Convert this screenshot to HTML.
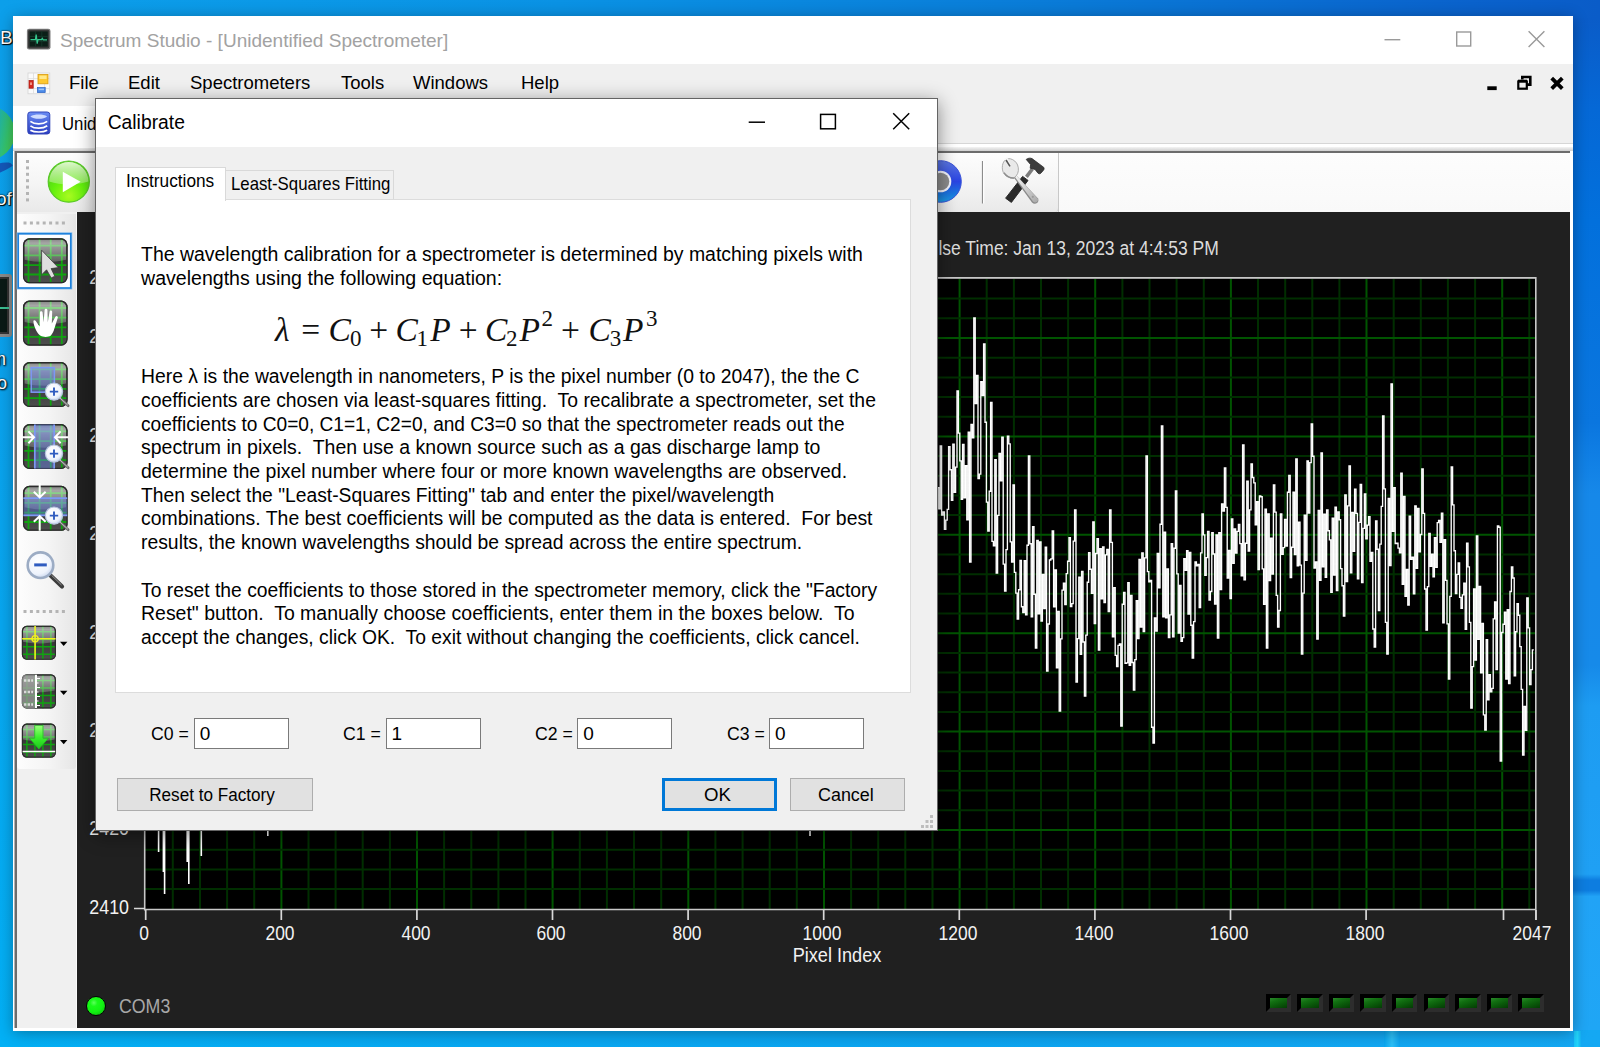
<!DOCTYPE html>
<html><head><meta charset="utf-8"><title>Spectrum Studio</title>
<style>
*{box-sizing:border-box;margin:0;padding:0}
html,body{width:1600px;height:1047px;overflow:hidden}
body{position:relative;font-family:"Liberation Sans",sans-serif;background:#1592e6;}
.abs{position:absolute}
.t{position:absolute;white-space:nowrap;line-height:1}
#desk{left:0;top:0;width:1600px;height:1047px;background:#0a8fe3}
#win{z-index:0;left:13px;top:16px;width:1560px;height:1015px;background:#f0f0f0;box-shadow:0 2px 14px rgba(0,0,0,.32)}
#titlebar{left:0;top:0;width:1560px;height:48px;background:#fff}
#menubar{left:0;top:48px;width:1560px;height:42px;background:#f0f0f0}
.menu{font-size:18.5px;color:#000;top:9.5px}
#mditabs{left:0;top:90px;width:1560px;height:37px;background:#f0f0f0;z-index:2}
#mditab{left:0;top:0;width:300px;height:41.5px;background:#fff;z-index:2}
#cframe{left:0;top:127px;width:1560px;height:888px;background:#fff}
#cframe .l1{left:0;top:0;width:1560px;height:1px;background:#d6d6d6}
#cframe .l2{left:0;top:4px;width:1560px;height:4px;background:linear-gradient(#f4f4f4,#cfcfcf)}
#cframe .l3{left:0.5px;top:7.5px;width:1556.5px;height:877px;background:#6c6c6c;border-left:1px solid #b4b4b4}
#child{left:4px;top:137px;width:1553px;height:875px;background:#202020}
#tb{left:0;top:0;width:1553px;height:59px;background:linear-gradient(#fdfdfd,#f9f9f9)}
#ltb{left:0;top:59px;width:60px;height:816px;background:#f0f0f0;border-right:1px solid #fafafa}
#ltb2{left:0;top:61px;width:59px;height:555px;border-radius:0 0 3px 3px;background:linear-gradient(90deg,#fdfdfd,#f4f4f4 55%,#e6e6e6)}
#dlg{z-index:4;left:94.5px;top:97.8px;width:843.5px;height:733.4px;background:#f0f0f0;border:1.5px solid #646464;border-right-width:1px;border-bottom-width:1px;box-shadow:0 4px 18px rgba(0,0,0,.45)}
#dtitle{left:0;top:0;width:841px;height:48px;background:#fff}
#page{left:19.5px;top:100px;width:796px;height:494px;background:#fff;border:1px solid #dcdcdc}
.p{position:absolute;left:24.6px;font-size:19.4px;line-height:24px;color:#000;white-space:pre;transform-origin:0 50%}
.inp{position:absolute;top:619px;width:95px;height:31px;background:#fff;border:1.5px solid #7a7a7a;color:#000}
.inp span{position:absolute;left:5px;top:5.2px;font-size:19px;line-height:20px;transform-origin:0 50%}
.lbl{position:absolute;top:625.6px;font-size:19px;line-height:20px;color:#000;white-space:nowrap;transform:scaleX(.93);transform-origin:0 50%}
.btn{position:absolute;top:679px;height:33px;background:#e1e1e1;border:1px solid #adadad;color:#000}
.btn span{position:absolute;left:-4px;right:0;top:6px;font-size:18.3px;line-height:20px;text-align:center;transform:scaleX(.936)}
.ax{position:absolute;color:#f2f2f2;font-size:19.5px;line-height:18px;white-space:nowrap;transform:scaleX(.895)}
</style></head><body>
<div id="desk" class="abs"></div>
<div class="abs" style="left:0;top:0;width:1600px;height:20px;background:linear-gradient(90deg,#0c9fea 0%,#0a92e4 35%,#0a7cd8 65%,#0a62cc 92%,#0a5cc8 100%)"></div>
<div class="abs" style="left:0;top:1028px;width:1600px;height:19px;background:linear-gradient(90deg,#03b0f5 0%,#08a8f2 30%,#0ca4f0 60%,#14a8f3 100%)"></div>
<div class="abs" style="left:0;top:18px;width:16px;height:1012px;background:linear-gradient(180deg,#0c9fea 0%,#0ba0eb 30%,#08a6ef 60%,#03b0f5 100%)"></div>
<div class="abs" style="left:1570px;top:18px;width:30px;height:1012px;background:linear-gradient(180deg,#0a5cc8 0%,#0568d6 9%,#0270dc 20%,#0a76df 40%,#0f7ee4 43%,#1688e9 47%,#168ae9 64%,#1d9cf2 68%,#1fa0f4 84.6%,#0d7de0 85.2%,#0d7de0 86.2%,#21a3f6 86.8%,#1fa6f5 100%)"></div>
<div class="abs" style="left:1574px;top:1031px;width:7px;height:16px;background:linear-gradient(90deg,#18c4f8,#22d4fa,#14aef3)"></div>
<div class="abs" style="left:1384px;top:1031px;width:16px;height:16px;background:linear-gradient(90deg,#08a6f0,#2cc0f8,#0ca4f0)"></div>
<!-- left desktop icons -->
<div class="abs" style="left:-39px;top:106px;width:54px;height:54px;border-radius:50%;background:linear-gradient(100deg,#1fb0a8 62%,#36c66a 82%,#52cc48 100%)"></div>
<div class="abs" style="left:-16px;top:163px;width:28px;height:11px;background:#1458b8;border-radius:0 90% 0 90%;transform:rotate(-32deg)"></div>
<div class="t" style="left:0px;top:28px;font-size:19px;color:#fff;text-shadow:1px 1px 1px #000,0 0 2px #000,0 0 1px #000">Bi</div>
<div class="t" style="left:-4px;top:189px;font-size:19px;color:#fff;text-shadow:1px 1px 1px #000,0 0 2px #000,0 0 1px #000">of</div>
<div class="abs" style="left:-30px;top:274px;width:42px;height:63px;background:#0a1a16;border:3px solid #8a8a8a;border-radius:3px;box-shadow:inset 0 0 0 2px #333"><div class="abs" style="left:6px;top:30px;width:30px;height:2px;background:#3bbf92"></div></div>
<div class="t" style="left:-9px;top:350px;font-size:18px;color:#fff;text-shadow:1px 1px 2px #000,0 0 2px #000">m</div>
<div class="t" style="left:-3px;top:374px;font-size:18px;color:#fff;text-shadow:1px 1px 2px #000,0 0 2px #000">o</div>
<div id="win" class="abs">
  <div id="titlebar" class="abs">
    <svg class="abs" style="left:12px;top:10px" width="28" height="26" viewBox="25 26 28 26"><rect x="26.9" y="28.8" width="23.6" height="20.6" rx="2.2" fill="#7d7d7d"/><rect x="28" y="29.8" width="21.4" height="18.6" rx="1.6" fill="#3a3a3a"/><rect x="29.6" y="31.4" width="18.2" height="15.2" fill="#0b1f18"/><path d="M29.6 36.4H47.8M29.6 41.4H47.8M35.6 31.4V46.6M41.8 31.4V46.6" stroke="#173a2c" stroke-width=".8"/><path d="M30.5 39.6H35.4L36.2 34.6L37.2 43.6L38 39.6H41.5L42.3 38.4L43.2 39.8H47" stroke="#36c890" stroke-width="1.2" fill="none"/></svg>
    <div class="t" id="apptitle" style="left:47px;top:14.5px;font-size:19.05px;color:#a2a2a2">Spectrum Studio - [Unidentified Spectrometer]</div>
    <svg class="abs" style="left:1360px;top:0" width="200" height="48" viewBox="1373 16 200 48"><g stroke="#9a9a9a" stroke-width="1.4" fill="none"><path d="M1384.5 39.7H1400.3"/><rect x="1456.7" y="32" width="14" height="14"/><path d="M1528.6 31.3L1544.4 47.1M1544.4 31.3L1528.6 47.1"/></g></svg>
  </div>
  <div id="menubar" class="abs">
    <svg class="abs" style="left:13px;top:6px" width="26" height="26" viewBox="26 70 26 26"><rect x="28" y="73" width="21.8" height="20.8" fill="#fafafa" stroke="#d4d4d4" stroke-width=".8"/><path d="M33.5 73V93.8M28 78.6H49.8M28 88.6H49.8M44.6 84V93.8" stroke="#dcdcdc" stroke-width=".8"/><rect x="29" y="80.4" width="4.2" height="7.8" fill="#d42a1e" stroke="#a81a12" stroke-width=".7"/><rect x="30.2" y="82.4" width="1.6" height="2.6" fill="#f6b0a0"/><rect x="38" y="74.4" width="10" height="9.4" fill="#fdc830" stroke="#d89a10" stroke-width=".8"/><rect x="39.4" y="75.6" width="7.2" height="3.4" fill="#ffe88a"/><rect x="37.4" y="87.6" width="7.8" height="5" fill="#4a8ae8" stroke="#2a62c0" stroke-width=".7"/><rect x="38.6" y="88.6" width="5.4" height="1.6" fill="#9cc4fa"/></svg>
    <div class="t menu" style="left:56px">File</div>
    <div class="t menu" style="left:115px">Edit</div>
    <div class="t menu" style="left:177px">Spectrometers</div>
    <div class="t menu" style="left:328px">Tools</div>
    <div class="t menu" style="left:400px">Windows</div>
    <div class="t menu" style="left:508px">Help</div>
    <svg class="abs" style="left:1460px;top:0" width="100" height="42" viewBox="1473 64 100 42"><rect x="1487.3" y="86.3" width="9.4" height="3.8" fill="#000"/><g stroke="#000" fill="none"><path d="M1522.3 79.5V77H1530.3V84.6H1526.8" stroke-width="2.6"/><rect x="1518.3" y="81.5" width="8.5" height="7.2" stroke-width="2.2"/><path d="M1518 81H1527" stroke-width="2.6"/><path d="M1551.7 78.2L1562.3 88.6M1562.3 78.2L1551.7 88.6" stroke-width="3.8"/></g></svg>
  </div>
  <div id="mditabs" class="abs"><div id="mditab" class="abs">
    <svg class="abs" style="left:13px;top:4px" width="26" height="28" viewBox="26 110 26 28"><defs><linearGradient id="gdb" x1="0" y1="0" x2="0" y2="1"><stop offset="0" stop-color="#6a8cf4"/><stop offset="1" stop-color="#2a3cc0"/></linearGradient></defs><rect x="27.8" y="112" width="22" height="22" rx="2.6" fill="url(#gdb)" stroke="#3346b8" stroke-width="1"/><path d="M30.4 116.4C34 113.8 43.6 113.8 47.2 116.4C43.6 119.6 34 119.6 30.4 116.4Z" fill="#cfdcff"/><path d="M30.4 121.4C34.5 124.6 43 124.6 47.2 121.4M30.4 125.8C34.5 129 43 129 47.2 125.8M30.4 130.2C34.5 132.6 43 132.6 47.2 130.2" stroke="#fff" stroke-width="1.7" fill="none"/></svg>
    <div class="t" style="left:49px;top:8.5px;font-size:18px;color:#000;transform:scaleX(.93);transform-origin:0 50%">Unidentified Spectrometer</div>
  </div></div>
  <div id="cframe" class="abs"><div class="abs l1"></div><div class="abs l2"></div><div class="abs l3"></div></div>
  <div id="child" class="abs">
    <div id="tb" class="abs"><div class="abs" style="left:0;top:0;width:1042px;height:59px;border-radius:0 0 4px 0;background:linear-gradient(#fdfdfd,#f5f5f5 50%,#e9e9e9);border-right:1px solid #c9c9c9"></div></div>
    <div id="ltb" class="abs"></div><div id="ltb2" class="abs"></div>
  </div>
</div>
<!-- plot -->
<svg class="abs" style="left:0;top:0" width="1600" height="1047" viewBox="0 0 1600 1047">
  <rect x="145" y="279" width="1390" height="630" fill="#000"/>
  <line x1="172.8" y1="279" x2="172.8" y2="909" stroke="#002e00" stroke-width="2"/>
<line x1="200.0" y1="279" x2="200.0" y2="909" stroke="#002e00" stroke-width="2"/>
<line x1="227.1" y1="279" x2="227.1" y2="909" stroke="#002e00" stroke-width="2"/>
<line x1="254.2" y1="279" x2="254.2" y2="909" stroke="#002e00" stroke-width="2"/>
<line x1="281.4" y1="279" x2="281.4" y2="909" stroke="#005400" stroke-width="2"/>
<line x1="308.5" y1="279" x2="308.5" y2="909" stroke="#002e00" stroke-width="2"/>
<line x1="335.6" y1="279" x2="335.6" y2="909" stroke="#002e00" stroke-width="2"/>
<line x1="362.7" y1="279" x2="362.7" y2="909" stroke="#002e00" stroke-width="2"/>
<line x1="389.9" y1="279" x2="389.9" y2="909" stroke="#002e00" stroke-width="2"/>
<line x1="417.0" y1="279" x2="417.0" y2="909" stroke="#005400" stroke-width="2"/>
<line x1="444.1" y1="279" x2="444.1" y2="909" stroke="#002e00" stroke-width="2"/>
<line x1="471.3" y1="279" x2="471.3" y2="909" stroke="#002e00" stroke-width="2"/>
<line x1="498.4" y1="279" x2="498.4" y2="909" stroke="#002e00" stroke-width="2"/>
<line x1="525.5" y1="279" x2="525.5" y2="909" stroke="#002e00" stroke-width="2"/>
<line x1="552.6" y1="279" x2="552.6" y2="909" stroke="#005400" stroke-width="2"/>
<line x1="579.8" y1="279" x2="579.8" y2="909" stroke="#002e00" stroke-width="2"/>
<line x1="606.9" y1="279" x2="606.9" y2="909" stroke="#002e00" stroke-width="2"/>
<line x1="634.0" y1="279" x2="634.0" y2="909" stroke="#002e00" stroke-width="2"/>
<line x1="661.2" y1="279" x2="661.2" y2="909" stroke="#002e00" stroke-width="2"/>
<line x1="688.3" y1="279" x2="688.3" y2="909" stroke="#005400" stroke-width="2"/>
<line x1="715.4" y1="279" x2="715.4" y2="909" stroke="#002e00" stroke-width="2"/>
<line x1="742.6" y1="279" x2="742.6" y2="909" stroke="#002e00" stroke-width="2"/>
<line x1="769.7" y1="279" x2="769.7" y2="909" stroke="#002e00" stroke-width="2"/>
<line x1="796.8" y1="279" x2="796.8" y2="909" stroke="#002e00" stroke-width="2"/>
<line x1="824.0" y1="279" x2="824.0" y2="909" stroke="#005400" stroke-width="2"/>
<line x1="851.1" y1="279" x2="851.1" y2="909" stroke="#002e00" stroke-width="2"/>
<line x1="878.2" y1="279" x2="878.2" y2="909" stroke="#002e00" stroke-width="2"/>
<line x1="905.3" y1="279" x2="905.3" y2="909" stroke="#002e00" stroke-width="2"/>
<line x1="932.5" y1="279" x2="932.5" y2="909" stroke="#002e00" stroke-width="2"/>
<line x1="959.6" y1="279" x2="959.6" y2="909" stroke="#005400" stroke-width="2"/>
<line x1="986.7" y1="279" x2="986.7" y2="909" stroke="#002e00" stroke-width="2"/>
<line x1="1013.9" y1="279" x2="1013.9" y2="909" stroke="#002e00" stroke-width="2"/>
<line x1="1041.0" y1="279" x2="1041.0" y2="909" stroke="#002e00" stroke-width="2"/>
<line x1="1068.1" y1="279" x2="1068.1" y2="909" stroke="#002e00" stroke-width="2"/>
<line x1="1095.2" y1="279" x2="1095.2" y2="909" stroke="#005400" stroke-width="2"/>
<line x1="1122.4" y1="279" x2="1122.4" y2="909" stroke="#002e00" stroke-width="2"/>
<line x1="1149.5" y1="279" x2="1149.5" y2="909" stroke="#002e00" stroke-width="2"/>
<line x1="1176.6" y1="279" x2="1176.6" y2="909" stroke="#002e00" stroke-width="2"/>
<line x1="1203.8" y1="279" x2="1203.8" y2="909" stroke="#002e00" stroke-width="2"/>
<line x1="1230.9" y1="279" x2="1230.9" y2="909" stroke="#005400" stroke-width="2"/>
<line x1="1258.0" y1="279" x2="1258.0" y2="909" stroke="#002e00" stroke-width="2"/>
<line x1="1285.2" y1="279" x2="1285.2" y2="909" stroke="#002e00" stroke-width="2"/>
<line x1="1312.3" y1="279" x2="1312.3" y2="909" stroke="#002e00" stroke-width="2"/>
<line x1="1339.4" y1="279" x2="1339.4" y2="909" stroke="#002e00" stroke-width="2"/>
<line x1="1366.5" y1="279" x2="1366.5" y2="909" stroke="#005400" stroke-width="2"/>
<line x1="1393.7" y1="279" x2="1393.7" y2="909" stroke="#002e00" stroke-width="2"/>
<line x1="1420.8" y1="279" x2="1420.8" y2="909" stroke="#002e00" stroke-width="2"/>
<line x1="1447.9" y1="279" x2="1447.9" y2="909" stroke="#002e00" stroke-width="2"/>
<line x1="1475.1" y1="279" x2="1475.1" y2="909" stroke="#002e00" stroke-width="2"/>
<line x1="1502.2" y1="279" x2="1502.2" y2="909" stroke="#005400" stroke-width="2"/>
<line x1="1529.3" y1="279" x2="1529.3" y2="909" stroke="#002e00" stroke-width="2"/>
<line x1="145" y1="298.6" x2="1535" y2="298.6" stroke="#002e00" stroke-width="2"/>
<line x1="145" y1="318.3" x2="1535" y2="318.3" stroke="#002e00" stroke-width="2"/>
<line x1="145" y1="338.0" x2="1535" y2="338.0" stroke="#005400" stroke-width="2"/>
<line x1="145" y1="357.7" x2="1535" y2="357.7" stroke="#002e00" stroke-width="2"/>
<line x1="145" y1="377.4" x2="1535" y2="377.4" stroke="#002e00" stroke-width="2"/>
<line x1="145" y1="397.0" x2="1535" y2="397.0" stroke="#002e00" stroke-width="2"/>
<line x1="145" y1="416.7" x2="1535" y2="416.7" stroke="#002e00" stroke-width="2"/>
<line x1="145" y1="436.4" x2="1535" y2="436.4" stroke="#005400" stroke-width="2"/>
<line x1="145" y1="456.1" x2="1535" y2="456.1" stroke="#002e00" stroke-width="2"/>
<line x1="145" y1="475.8" x2="1535" y2="475.8" stroke="#002e00" stroke-width="2"/>
<line x1="145" y1="495.4" x2="1535" y2="495.4" stroke="#002e00" stroke-width="2"/>
<line x1="145" y1="515.1" x2="1535" y2="515.1" stroke="#002e00" stroke-width="2"/>
<line x1="145" y1="534.8" x2="1535" y2="534.8" stroke="#005400" stroke-width="2"/>
<line x1="145" y1="554.5" x2="1535" y2="554.5" stroke="#002e00" stroke-width="2"/>
<line x1="145" y1="574.2" x2="1535" y2="574.2" stroke="#002e00" stroke-width="2"/>
<line x1="145" y1="593.8" x2="1535" y2="593.8" stroke="#002e00" stroke-width="2"/>
<line x1="145" y1="613.5" x2="1535" y2="613.5" stroke="#002e00" stroke-width="2"/>
<line x1="145" y1="633.2" x2="1535" y2="633.2" stroke="#005400" stroke-width="2"/>
<line x1="145" y1="652.9" x2="1535" y2="652.9" stroke="#002e00" stroke-width="2"/>
<line x1="145" y1="672.6" x2="1535" y2="672.6" stroke="#002e00" stroke-width="2"/>
<line x1="145" y1="692.2" x2="1535" y2="692.2" stroke="#002e00" stroke-width="2"/>
<line x1="145" y1="711.9" x2="1535" y2="711.9" stroke="#002e00" stroke-width="2"/>
<line x1="145" y1="731.6" x2="1535" y2="731.6" stroke="#005400" stroke-width="2"/>
<line x1="145" y1="751.3" x2="1535" y2="751.3" stroke="#002e00" stroke-width="2"/>
<line x1="145" y1="771.0" x2="1535" y2="771.0" stroke="#002e00" stroke-width="2"/>
<line x1="145" y1="790.6" x2="1535" y2="790.6" stroke="#002e00" stroke-width="2"/>
<line x1="145" y1="810.3" x2="1535" y2="810.3" stroke="#002e00" stroke-width="2"/>
<line x1="145" y1="830.0" x2="1535" y2="830.0" stroke="#005400" stroke-width="2"/>
<line x1="145" y1="849.7" x2="1535" y2="849.7" stroke="#002e00" stroke-width="2"/>
<line x1="145" y1="869.4" x2="1535" y2="869.4" stroke="#002e00" stroke-width="2"/>
<line x1="145" y1="889.0" x2="1535" y2="889.0" stroke="#002e00" stroke-width="2"/>
  <path d="M936.0 435.6V475.5H937.4V487.6H938.8V508.7H940.2V446.0H941.6V515.1H943.0V511.8H944.4V529.4H945.8V520.1H947.2V509.3H948.6V446.7H950.0V469.7H951.4V500.2H952.8V444.1H954.2V492.2H955.6V467.1H957.0V391.0H958.4V433.1H959.8V460.8H961.2V499.2H962.6V444.4H964.0V497.7H965.4V465.7H966.8V519.8H968.2V432.2H969.6V562.0H971.0V424.4H972.4V437.9H973.8V318.0H975.2V403.6H976.6V375.5H978.0V478.5H979.4V474.1H980.8V381.7H982.2V395.5H983.6V344.0H985.0V422.2H986.4V502.1H987.8V531.0H989.2V491.2H990.6V402.5H992.0V541.4H993.4V545.8H994.8V459.7H996.2V573.0H997.6V515.3H999.0V453.3H1000.4V480.7H1001.8V437.2H1003.2V564.1H1004.6V591.0H1006.0V549.6H1007.4V436.2H1008.8V443.8H1010.2V541.8H1011.6V562.0H1013.0V484.9H1014.4V572.3H1015.8V593.1H1017.2V619.0H1018.6V589.7H1020.0V560.4H1021.4V606.7H1022.8V612.6H1024.2V560.7H1025.6V614.9H1027.0V545.2H1028.4V456.0H1029.8V543.7H1031.2V616.7H1032.6V526.7H1034.0V594.2H1035.4V648.0H1036.8V540.4H1038.2V613.9H1039.6V541.8H1041.0V621.0H1042.4V574.5H1043.8V608.5H1045.2V547.1H1046.6V671.0H1048.0V624.0H1049.4V560.0H1050.8V558.9H1052.2V531.0H1053.6V606.7H1055.0V569.9H1056.4V667.8H1057.8V611.4H1059.2V711.0H1060.6V638.8H1062.0V590.1H1063.4V583.2H1064.8V604.5H1066.2V573.6H1067.6V561.2H1069.0V537.6H1070.4V606.5H1071.8V603.6H1073.2V541.1H1074.6V510.0H1076.0V682.0H1077.4V638.6H1078.8V577.2H1080.2V654.4H1081.6V571.5H1083.0V642.0H1084.4V696.0H1085.8V635.1H1087.2V582.2H1088.6V552.6H1090.0V569.2H1091.4V593.3H1092.8V522.0H1094.2V623.5H1095.6V553.5H1097.0V538.6H1098.4V650.0H1099.8V548.6H1101.2V598.7H1102.6V546.8H1104.0V602.5H1105.4V554.9H1106.8V549.4H1108.2V611.5H1109.6V510.0H1111.0V542.4H1112.4V636.7H1113.8V587.6H1115.2V655.4H1116.6V666.5H1118.0V645.4H1119.4V644.0H1120.8V726.0H1122.2V604.2H1123.6V592.3H1125.0V663.2H1126.4V662.9H1127.8V582.6H1129.2V665.2H1130.6V595.3H1132.0V662.5H1133.4V690.0H1134.8V659.6H1136.2V600.7H1137.6V638.6H1139.0V559.5H1140.4V627.1H1141.8V552.8H1143.2V631.5H1144.6V557.8H1146.0V456.0H1147.4V571.6H1148.8V581.8H1150.2V580.4H1151.6V727.2H1153.0V743.0H1154.4V618.0H1155.8V631.1H1157.2V553.5H1158.6V587.8H1160.0V524.2H1161.4V426.0H1162.8V616.7H1164.2V532.2H1165.6V617.8H1167.0V568.8H1168.4V637.5H1169.8V614.9H1171.2V543.6H1172.6V636.9H1174.0V548.2H1175.4V491.0H1176.8V573.8H1178.2V633.1H1179.6V585.5H1181.0V641.2H1182.4V637.6H1183.8V558.7H1185.2V570.3H1186.6V550.7H1188.0V614.1H1189.4V552.5H1190.8V625.2H1192.2V658.0H1193.6V621.6H1195.0V562.0H1196.4V565.7H1197.8V564.3H1199.2V607.5H1200.6V552.8H1202.0V514.0H1203.4V534.8H1204.8V575.3H1206.2V557.6H1207.6V531.4H1209.0V600.0H1210.4V591.5H1211.8V532.6H1213.2V554.0H1214.6V604.0H1216.0V534.8H1217.4V638.0H1218.8V532.6H1220.2V589.5H1221.6V504.0H1223.0V511.1H1224.4V468.0H1225.8V507.3H1227.2V578.1H1228.6V550.5H1230.0V598.5H1231.4V518.9H1232.8V563.3H1234.2V529.0H1235.6V553.0H1237.0V531.3H1238.4V524.3H1239.8V543.6H1241.2V575.8H1242.6V445.0H1244.0V579.9H1245.4V543.2H1246.8V481.1H1248.2V551.0H1249.6V509.9H1251.0V464.0H1252.4V477.5H1253.8V482.8H1255.2V524.7H1256.6V501.7H1258.0V569.5H1259.4V496.0H1260.8V496.7H1262.2V568.8H1263.6V604.4H1265.0V509.1H1266.4V648.0H1267.8V513.8H1269.2V580.5H1270.6V538.1H1272.0V574.1H1273.4V485.0H1274.8V512.1H1276.2V595.4H1277.6V627.0H1279.0V610.5H1280.4V513.9H1281.8V554.4H1283.2V547.6H1284.6V519.4H1286.0V546.1H1287.4V492.2H1288.8V475.3H1290.2V577.5H1291.6V547.2H1293.0V492.2H1294.4V554.6H1295.8V459.0H1297.2V565.8H1298.6V522.1H1300.0V565.1H1301.4V654.0H1302.8V593.1H1304.2V515.2H1305.6V560.3H1307.0V461.0H1308.4V513.0H1309.8V462.6H1311.2V424.0H1312.6V456.2H1314.0V568.0H1315.4V561.8H1316.8V639.0H1318.2V510.3H1319.6V580.2H1321.0V453.0H1322.4V566.9H1323.8V514.1H1325.2V577.4H1326.6V510.0H1328.0V530.7H1329.4V539.9H1330.8V592.4H1332.2V518.1H1333.6V575.1H1335.0V507.1H1336.4V590.6H1337.8V512.0H1339.2V519.7H1340.6V568.6H1342.0V585.7H1343.4V616.0H1344.8V494.9H1346.2V581.5H1347.6V505.9H1349.0V466.0H1350.4V572.9H1351.8V512.3H1353.2V551.3H1354.6V489.2H1356.0V513.3H1357.4V578.9H1358.8V522.4H1360.2V484.4H1361.6V582.6H1363.0V528.4H1364.4V494.0H1365.8V538.9H1367.2V525.1H1368.6V516.6H1370.0V561.4H1371.4V552.3H1372.8V629.0H1374.2V647.0H1375.6V520.8H1377.0V549.2H1378.4V610.6H1379.8V544.1H1381.2V506.3H1382.6V416.0H1384.0V488.9H1385.4V622.4H1386.8V654.0H1388.2V498.5H1389.6V565.6H1391.0V384.0H1392.4V531.4H1393.8V487.6H1395.2V543.5H1396.6V543.1H1398.0V548.1H1399.4V552.8H1400.8V473.1H1402.2V584.2H1403.6V496.4H1405.0V596.3H1406.4V569.5H1407.8V605.0H1409.2V516.1H1410.6V559.4H1412.0V557.1H1413.4V593.7H1414.8V506.0H1416.2V568.2H1417.6V508.5H1419.0V551.9H1420.4V534.5H1421.8V469.0H1423.2V513.4H1424.6V589.0H1426.0V630.0H1427.4V586.6H1428.8V533.4H1430.2V566.4H1431.6V554.2H1433.0V576.8H1434.4V537.7H1435.8V567.3H1437.2V522.6H1438.6V520.5H1440.0V542.3H1441.4V513.2H1442.8V622.8H1444.2V539.6H1445.6V580.3H1447.0V623.9H1448.4V679.0H1449.8V596.3H1451.2V467.0H1452.6V504.9H1454.0V550.7H1455.4V593.6H1456.8V574.4H1458.2V562.8H1459.6V597.4H1461.0V608.2H1462.4V594.9H1463.8V583.1H1465.2V629.2H1466.6V543.1H1468.0V566.8H1469.4V622.4H1470.8V708.0H1472.2V666.6H1473.6V589.0H1475.0V660.1H1476.4V536.0H1477.8V639.4H1479.2V586.5H1480.6V672.9H1482.0V623.4H1483.4V714.8H1484.8V730.0H1486.2V639.6H1487.6V699.7H1489.0V674.7H1490.4V691.9H1491.8V688.4H1493.2V618.8H1494.6V602.0H1496.0V669.6H1497.4V526.0H1498.8V527.2H1500.2V761.0H1501.6V632.5H1503.0V624.2H1504.4V612.1H1505.8V679.1H1507.2V609.7H1508.6V683.5H1510.0V591.5H1511.4V567.0H1512.8V578.0H1514.2V675.8H1515.6V631.7H1517.0V603.7H1518.4V615.2H1519.8V646.6H1521.2V689.4H1522.6V755.0H1524.0V706.3H1525.4V730.4H1526.8V598.0H1528.2V627.9H1529.6V684.5H1531.0V669.6H1532.4V649.9H1533.8" stroke="#fff" stroke-width="1.35" fill="none" stroke-linejoin="miter"/>
<path d="M158.6 820V852M163.4 820V872M164.6 820V894M187.2 820V862M188.8 820V884M201.3 820V856M267.8 820V836M810.0 820V836" stroke="#fff" stroke-width="1.6" fill="none"/>
  <path d="M145 277.9H1536.6M144.7 277V910.5M144 909.5H1536M1535.8 277V920" stroke="#c8c8c8" stroke-width="1.6" fill="none"/>
  <path d="M145.7 910V920M281.3 910V920M416.9 910V920M552.5 910V920M688.1 910V920M823.7 910V920M959.3 910V920M1094.9 910V920M1230.5 910V920M1366.1 910V920M1503.5 910V920M1536.0 910V920M134 277.5H145M134 337.0H145M134 435.4H145M134 533.8H145M134 632.2H145M134 730.6H145M134 829.0H145M134 908.5H145" stroke="#d8d8d8" stroke-width="1.7" fill="none"/>
</svg>
<div class="ax" style="left:104.4px;top:924.4px;width:80px;text-align:center">0</div>
<div class="ax" style="left:240.0px;top:924.4px;width:80px;text-align:center">200</div>
<div class="ax" style="left:375.6px;top:924.4px;width:80px;text-align:center">400</div>
<div class="ax" style="left:511.2px;top:924.4px;width:80px;text-align:center">600</div>
<div class="ax" style="left:646.8px;top:924.4px;width:80px;text-align:center">800</div>
<div class="ax" style="left:782.4px;top:924.4px;width:80px;text-align:center">1000</div>
<div class="ax" style="left:918.0px;top:924.4px;width:80px;text-align:center">1200</div>
<div class="ax" style="left:1053.6px;top:924.4px;width:80px;text-align:center">1400</div>
<div class="ax" style="left:1189.2px;top:924.4px;width:80px;text-align:center">1600</div>
<div class="ax" style="left:1324.8px;top:924.4px;width:80px;text-align:center">1800</div>
<div class="ax" style="left:1491.9px;top:924.4px;width:80px;text-align:center">2047</div>
<div class="ax" style="left:736.7px;top:945.9px;width:200px;text-align:center;transform:scaleX(.93)">Pixel Index</div>
<div class="ax" style="left:28.5px;top:268.3px;width:100px;text-align:right;transform:scaleX(.915);transform-origin:100% 50%">2474</div>
<div class="ax" style="left:28.5px;top:327.3px;width:100px;text-align:right;transform:scaleX(.915);transform-origin:100% 50%">2470</div>
<div class="ax" style="left:28.5px;top:425.7px;width:100px;text-align:right;transform:scaleX(.915);transform-origin:100% 50%">2460</div>
<div class="ax" style="left:28.5px;top:524.1px;width:100px;text-align:right;transform:scaleX(.915);transform-origin:100% 50%">2450</div>
<div class="ax" style="left:28.5px;top:622.5px;width:100px;text-align:right;transform:scaleX(.915);transform-origin:100% 50%">2440</div>
<div class="ax" style="left:28.5px;top:720.9px;width:100px;text-align:right;transform:scaleX(.915);transform-origin:100% 50%">2430</div>
<div class="ax" style="left:28.5px;top:819.3px;width:100px;text-align:right;transform:scaleX(.915);transform-origin:100% 50%">2420</div>
<div class="ax" style="left:28.5px;top:898.3px;width:100px;text-align:right;transform:scaleX(.915);transform-origin:100% 50%">2410</div>
<div class="ax" id="pulse" style="left:916.6px;top:239.4px;transform-origin:0 50%;transform:scaleX(.898);color:#dcdcdc">Pulse Time: Jan 13, 2023 at 4:4:53 PM</div>
<div class="abs" style="left:88.4px;top:998.4px;width:17px;height:17px;border-radius:50%;background:#5a5a5a"></div><div class="abs" style="left:85.5px;top:995.5px;width:20px;height:20px;border-radius:50%;border:1.2px solid #050505;background:radial-gradient(circle at 38% 32%,#5cff5c 0%,#1afa1a 22%,#12f212 55%,#0cc00c 85%,#088008 100%)"></div>
<div class="ax" style="left:119px;top:997.2px;color:#a8a8a8;transform-origin:0 50%;transform:scaleX(.91)">COM3</div>
<div class="abs" style="left:1265.5px;top:993.5px;width:25.5px;height:18.5px;border-style:solid;border-width:4px 4.5px 4.5px 4.5px;border-color:#000 #2d2d2d #2d2d2d #000;background:linear-gradient(160deg,#2b8a2b 0%,#127012 30%,#0a5a0a 60%,#043c04 100%)"></div>
<div class="abs" style="left:1297.1px;top:993.5px;width:25.5px;height:18.5px;border-style:solid;border-width:4px 4.5px 4.5px 4.5px;border-color:#000 #2d2d2d #2d2d2d #000;background:linear-gradient(160deg,#2b8a2b 0%,#127012 30%,#0a5a0a 60%,#043c04 100%)"></div>
<div class="abs" style="left:1328.7px;top:993.5px;width:25.5px;height:18.5px;border-style:solid;border-width:4px 4.5px 4.5px 4.5px;border-color:#000 #2d2d2d #2d2d2d #000;background:linear-gradient(160deg,#2b8a2b 0%,#127012 30%,#0a5a0a 60%,#043c04 100%)"></div>
<div class="abs" style="left:1360.3px;top:993.5px;width:25.5px;height:18.5px;border-style:solid;border-width:4px 4.5px 4.5px 4.5px;border-color:#000 #2d2d2d #2d2d2d #000;background:linear-gradient(160deg,#2b8a2b 0%,#127012 30%,#0a5a0a 60%,#043c04 100%)"></div>
<div class="abs" style="left:1391.9px;top:993.5px;width:25.5px;height:18.5px;border-style:solid;border-width:4px 4.5px 4.5px 4.5px;border-color:#000 #2d2d2d #2d2d2d #000;background:linear-gradient(160deg,#2b8a2b 0%,#127012 30%,#0a5a0a 60%,#043c04 100%)"></div>
<div class="abs" style="left:1423.5px;top:993.5px;width:25.5px;height:18.5px;border-style:solid;border-width:4px 4.5px 4.5px 4.5px;border-color:#000 #2d2d2d #2d2d2d #000;background:linear-gradient(160deg,#2b8a2b 0%,#127012 30%,#0a5a0a 60%,#043c04 100%)"></div>
<div class="abs" style="left:1455.1px;top:993.5px;width:25.5px;height:18.5px;border-style:solid;border-width:4px 4.5px 4.5px 4.5px;border-color:#000 #2d2d2d #2d2d2d #000;background:linear-gradient(160deg,#2b8a2b 0%,#127012 30%,#0a5a0a 60%,#043c04 100%)"></div>
<div class="abs" style="left:1486.7px;top:993.5px;width:25.5px;height:18.5px;border-style:solid;border-width:4px 4.5px 4.5px 4.5px;border-color:#000 #2d2d2d #2d2d2d #000;background:linear-gradient(160deg,#2b8a2b 0%,#127012 30%,#0a5a0a 60%,#043c04 100%)"></div>
<div class="abs" style="left:1518.3px;top:993.5px;width:25.5px;height:18.5px;border-style:solid;border-width:4px 4.5px 4.5px 4.5px;border-color:#000 #2d2d2d #2d2d2d #000;background:linear-gradient(160deg,#2b8a2b 0%,#127012 30%,#0a5a0a 60%,#043c04 100%)"></div>
<svg class="abs" style="left:0;top:0" width="1600" height="1047" viewBox="0 0 1600 1047">
<defs>
<linearGradient id="gDark" x1="0" y1="0" x2="0" y2="1"><stop offset="0" stop-color="#5a5a5a"/><stop offset=".12" stop-color="#7a7a7a"/><stop offset=".48" stop-color="#565656"/><stop offset=".52" stop-color="#343434"/><stop offset="1" stop-color="#444"/></linearGradient>
<radialGradient id="gPlay" cx=".5" cy=".85" r=".75"><stop offset="0" stop-color="#a8fa20"/><stop offset=".55" stop-color="#62f00c"/><stop offset="1" stop-color="#4ec818"/></radialGradient>
<linearGradient id="gPlayHi" x1="0" y1="0" x2="0" y2="1"><stop offset="0" stop-color="#e6fbd6" stop-opacity=".95"/><stop offset="1" stop-color="#b6f090" stop-opacity=".55"/></linearGradient>
<linearGradient id="gBlue" x1="0" y1="0" x2="0" y2="1"><stop offset="0" stop-color="#5c78e4"/><stop offset=".5" stop-color="#2a44e2"/><stop offset=".8" stop-color="#1a78e0"/><stop offset="1" stop-color="#1c9ce4"/></linearGradient>
<radialGradient id="gLens" cx=".4" cy=".35" r=".7"><stop offset="0" stop-color="#fff"/><stop offset=".7" stop-color="#eef3fc"/><stop offset="1" stop-color="#c4d2ec"/></radialGradient>
<linearGradient id="gArrow" x1="0" y1="0" x2="0" y2="1"><stop offset="0" stop-color="#9cff7c"/><stop offset=".5" stop-color="#3cf02c"/><stop offset="1" stop-color="#1cc81c"/></linearGradient>
<linearGradient id="gWrench" x1="0" y1="0" x2="1" y2="1"><stop offset="0" stop-color="#f4f4f4"/><stop offset=".5" stop-color="#cfcfcf"/><stop offset="1" stop-color="#a8a8a8"/></linearGradient>
<clipPath id="clipIcon"><rect x="0" y="0" width="44.6" height="45" rx="6.5"/></clipPath>
<clipPath id="clipIconS"><rect x="0" y="0" width="34" height="34" rx="5"/></clipPath>
<linearGradient id="gBase" x1="0" y1="0" x2="0" y2="1"><stop offset="0" stop-color="#3a3a3a"/><stop offset=".5" stop-color="#383838"/><stop offset="1" stop-color="#4e4e4e"/></linearGradient>
<linearGradient id="gGloss" x1="0" y1="0" x2="0" y2="1"><stop offset="0" stop-color="#fff" stop-opacity=".42"/><stop offset=".15" stop-color="#fff" stop-opacity=".55"/><stop offset="1" stop-color="#fff" stop-opacity=".2"/></linearGradient>
<g id="icoBg"><rect x="0" y="0" width="44.6" height="45" rx="6.5" fill="url(#gBase)"/><path d="M5.5 0V45M16.6 0V45M27.7 0V45M38.8 0V45M0 7.4H44.6M0 17.1H44.6M0 26.8H44.6M0 36.2H44.6" stroke="#10a210" stroke-width="1.8" clip-path="url(#clipIcon)"/><path d="M1.5 6.5A5 5 0 0 1 6.5 1.5H38.1A5 5 0 0 1 43.1 6.5V21.5C30 24.5 14 24.5 1.5 21.5Z" fill="url(#gGloss)"/><rect x=".6" y=".6" width="43.4" height="43.8" rx="6" fill="none" stroke="#2b2b2b" stroke-width="1.3"/></g>
<g id="icoBgS"><rect x="0" y="0" width="34" height="34" rx="5" fill="url(#gBase)"/><path d="M5 0V34M13 0V34M21 0V34M29 0V34M0 6H34M0 13.5H34M0 21H34M0 28.5H34" stroke="#10a210" stroke-width="1.5" clip-path="url(#clipIconS)"/><path d="M1.2 5A4 4 0 0 1 5.2 1.2H28.8A4 4 0 0 1 32.8 5V16C23 18.4 11 18.4 1.2 16Z" fill="url(#gGloss)"/><rect x=".5" y=".5" width="33" height="33" rx="4.6" fill="none" stroke="#2b2b2b" stroke-width="1.1"/></g>
<g id="mag"><path d="M5.5 6L14.2 14.2" stroke="#6a6a6a" stroke-width="2.6" stroke-linecap="round"/><path d="M6 6.4L13.8 13.6" stroke="#c4c4c4" stroke-width="1"/><circle cx="0" cy="0" r="8.6" fill="url(#gLens)" stroke="#b6c4dc" stroke-width="1.2"/><path d="M-4.2 0H4.2M0 -4.2V4.2" stroke="#2f5cc0" stroke-width="1.9"/></g>
</defs>
<!-- toolbar grips -->
<g fill="#b4b4b4"><rect x="26" y="160" width="3" height="3"/><rect x="26" y="166.4" width="3" height="3"/><rect x="26" y="172.8" width="3" height="3"/><rect x="26" y="179.2" width="3" height="3"/><rect x="26" y="185.6" width="3" height="3"/><rect x="26" y="192" width="3" height="3"/><rect x="26" y="198.4" width="3" height="3"/>
<rect x="23.5" y="221.5" width="3" height="3"/><rect x="29.9" y="221.5" width="3" height="3"/><rect x="36.3" y="221.5" width="3" height="3"/><rect x="42.7" y="221.5" width="3" height="3"/><rect x="49.1" y="221.5" width="3" height="3"/><rect x="55.5" y="221.5" width="3" height="3"/><rect x="61.9" y="221.5" width="3" height="3"/>
<rect x="23.5" y="610" width="3" height="3"/><rect x="29.9" y="610" width="3" height="3"/><rect x="36.3" y="610" width="3" height="3"/><rect x="42.7" y="610" width="3" height="3"/><rect x="49.1" y="610" width="3" height="3"/><rect x="55.5" y="610" width="3" height="3"/><rect x="61.9" y="610" width="3" height="3"/></g>
<!-- play -->
<circle cx="68.8" cy="181.6" r="20.6" fill="url(#gPlay)" stroke="#58c828" stroke-width="1.2"/>
<path d="M49.2 181.6A19.6 19.6 0 0 1 88.4 181.6C76 185.5 61 185.5 49.2 181.6Z" fill="url(#gPlayHi)"/>
<path d="M62.8 171.7L80.6 181.8L62.8 192.3Z" fill="#fff"/>
<!-- blue circle (partly hidden by dialog) -->
<circle cx="940.5" cy="181.5" r="20.8" fill="url(#gBlue)" stroke="#3a52d8" stroke-width="1"/>
<circle cx="940.5" cy="181.5" r="10.8" fill="#f4f6ff"/><circle cx="940.5" cy="181.5" r="8.8" fill="#8c8c8c"/>
<!-- separator -->
<path d="M982.5 161V203.5" stroke="#8c8c8c" stroke-width="1.2"/><path d="M983.7 161V203.5" stroke="#fff" stroke-width="1.2"/>
<!-- tools: hammer + wrench -->
<g>
<path d="M1005.6 198.2L1022.6 176.4L1028 180.4L1011.4 202.4Z" fill="#2a2a2a" stroke="#2a2a2a" stroke-width="1" stroke-linejoin="round"/>
<path d="M1026.4 176.8L1032.4 169" stroke="#7c7c7c" stroke-width="3.6"/>
<path d="M1026.2 159.4C1028 158 1030.4 157.8 1032 158.6L1043.8 167.4C1044.4 168.4 1044 169.8 1043.2 170.6L1040.6 173.4C1039.8 174 1038.8 173.8 1038 173.2L1035 169.4L1030.2 168.2L1030.6 164.6Z" fill="#3c3c3c" stroke="#2a2a2a" stroke-width=".8"/>
<path d="M1013.6 177.2L1015.8 174.8L1037.8 198.2C1039 200 1038.4 202 1037 203C1035.4 204 1033.4 203.8 1032 202.4Z" fill="#8a8a8a"/>
<path d="M1014.6 176.6L1016.2 175.2L1037.6 198.4C1038.4 199.8 1038 201.2 1036.8 202C1035.4 202.8 1034 202.4 1033 201.4Z" fill="url(#gWrench)"/>
<circle cx="1032.8" cy="196.8" r="1.1" fill="#9a9a9a"/>
<path d="M1004.6 160.6C1001.6 164.2 1001.6 170.4 1004.2 174C1006.2 176.6 1009.6 178 1013.4 178.4L1016.4 175.6C1018.6 173 1019 168.6 1017.6 165C1016.4 162 1013.6 159.6 1010.4 158.8C1008.4 158.4 1006.4 159 1004.6 160.6Z" fill="#e9e9e9" stroke="#a4a4a4" stroke-width=".9"/>
<path d="M1004.2 158.6L1007.4 157.6L1011 165.8L1008.6 167Z" fill="#f6f6f6"/><path d="M1006 160L1010 166.4" stroke="#555" stroke-width="1.6"/>
<path d="M1004 172.6C1006.4 176.4 1010.4 178.2 1014.4 178" stroke="#8e8e8e" stroke-width="1.4" fill="none"/>
</g>
<path d="M1058.5 156V212" stroke="#c8c8c8" stroke-width="1"/>
<!-- selection box on first icon -->
<rect x="17.2" y="232.8" width="54.6" height="56.2" fill="none" stroke="#8cc0ee" stroke-width="1"/><rect x="18.2" y="233.8" width="52.6" height="54.2" fill="#fcfdff" stroke="#1e82dc" stroke-width="1.7"/>
<!-- icon 1 pointer -->
<use href="#icoBg" x="23" y="238.3"/>
<path d="M41.6 250.2V274.8L46.6 269.8L51.2 278L54.8 276.2L51.1 268.6L58.3 267.6Z" fill="#dedede" stroke="#3c3c3c" stroke-width=".8"/>
<!-- icon 2 hand -->
<use href="#icoBg" x="23" y="300.6"/>
<path d="M36.2 330.5C34.8 327.5 33.6 324.2 33.4 321.4C33.3 320 35 319.8 35.8 321L39.6 326.4L39.9 312.6C40 310.8 42.4 310.8 42.6 312.6L43.6 322.2L44.6 310C44.7 308.2 47.2 308.2 47.4 310L47.8 322.2L49.6 311.6C49.9 309.9 52.2 310.2 52.2 312L51.8 323.6L55.4 316.8C56.2 315.4 58.2 316.2 57.8 317.8L54.4 328.4C53.6 331 52.8 333.4 50.6 335.8C48.4 337.2 43.2 337.4 40.6 335.8C38.8 334.6 37.2 332.6 36.2 330.5Z" fill="#fff"/>
<!-- icon 3 zoom box -->
<use href="#icoBg" x="23" y="362"/>
<rect x="31.2" y="367.6" width="23.2" height="24.6" fill="#6a86ea" fill-opacity=".45" stroke="#7c98f4" stroke-width="1.5"/>
<use href="#mag" x="54" y="391.6"/>
<!-- icon 4 zoom x -->
<use href="#icoBg" x="23" y="424"/>
<rect x="34.6" y="424.4" width="19.8" height="44.2" fill="#6a86ea" fill-opacity=".45"/>
<path d="M34.8 424.4V468.6M54.2 424.4V468.6" stroke="#7c98f4" stroke-width="1.7"/>
<path d="M20.6 437.3H33.6M28.4 431.4L34 437.3L28.4 443.2M68.4 437.3H55.4M60.6 431.4L55 437.3L60.6 443.2" stroke="#fff" stroke-width="2" fill="none"/>
<use href="#mag" x="54" y="453.6"/>
<!-- icon 5 zoom y -->
<use href="#icoBg" x="23" y="485.8"/>
<rect x="23.4" y="498" width="43.8" height="17.6" fill="#6a86ea" fill-opacity=".45"/>
<path d="M23.4 498.2H67.2M23.4 515.4H67.2" stroke="#7c98f4" stroke-width="1.7"/>
<path d="M39.7 483V497M33.8 491.8L39.7 497.4L45.6 491.8M39.7 530.8V516.6M33.8 521.8L39.7 516.2L45.6 521.8" stroke="#fff" stroke-width="2" fill="none"/>
<use href="#mag" x="54" y="515.6"/>
<!-- icon 6 zoom out -->
<path d="M50.5 575.5L62 586.6" stroke="#3c3c3c" stroke-width="4.2" stroke-linecap="round"/>
<path d="M51.5 575.2L61.5 585" stroke="#9a9a9a" stroke-width="1"/>
<circle cx="40.5" cy="565.2" r="12.8" fill="url(#gLens)" stroke="#9cacc4" stroke-width="2.6"/>
<path d="M34.2 564.9H46.8" stroke="#2f5cc0" stroke-width="3"/>
<!-- icon 7 cursor -->
<use href="#icoBgS" x="21.9" y="625.7"/>
<path d="M35.1 626V659.4M22.2 638.7H55.6" stroke="#f0ee20" stroke-width="1.6"/><circle cx="35.1" cy="638.7" r="3.1" fill="none" stroke="#f0ee20" stroke-width="1.4"/>
<path d="M60 641.8H67.4L63.7 646Z" fill="#000"/>
<!-- icon 8 scale -->
<use href="#icoBgS" x="21.9" y="674.4"/>
<path d="M26.9 674.4H35V708.4H26.9A5 5 0 0 1 21.9 703.4V679.4A5 5 0 0 1 26.9 674.4Z" fill="#9a9a9a" fill-opacity=".75"/>
<path d="M36 674.8V708" stroke="#fff" stroke-width="2"/><path d="M36 678.5H40M36 683H38.5M36 687.5H40M36 692H38.5M36 696.5H40M36 701H38.5M36 705.5H40" stroke="#fff" stroke-width="1.2"/>
<path d="M24 680.5H33M24 692H33M24 704.5H33" stroke="#e8e8e8" stroke-width="2.4" stroke-dasharray="2.4 1.2" opacity=".85"/>
<path d="M60 690.8H67.4L63.7 695Z" fill="#000"/>
<!-- icon 9 download -->
<use href="#icoBgS" x="21.9" y="723.6"/>
<path d="M34.7 725.4H43V738.2H48.4L38.9 748.9L29.3 738.2H34.7Z" fill="url(#gArrow)" stroke="#28b428" stroke-width=".8"/>
<path d="M22.6 751.4H55.2" stroke="#fff" stroke-width="1.5"/>
<path d="M60 740H67.4L63.7 744.2Z" fill="#000"/>
</svg>

<div id="dlg" class="abs">
  <div id="dtitle" class="abs">
    <div class="t" style="left:12.2px;top:14.6px;font-size:19.3px;color:#000">Calibrate</div>
    <svg class="abs" style="left:640px;top:0" width="200" height="48" viewBox="736 99 200 48"><g stroke="#000" stroke-width="1.5" fill="none"><path d="M748.7 122.2H765"/><rect x="820.6" y="114.4" width="14.8" height="14.4"/><path d="M893.2 113.3L909.2 129.3M909.2 113.3L893.2 129.3"/></g></svg>
  </div>
  <div class="abs" style="left:128px;top:71px;width:170px;height:30px;background:#f0f0f0;border:1px solid #d9d9d9;border-bottom:none"><div class="t" style="left:6.2px;top:4.6px;font-size:18.6px;transform:scaleX(.902);transform-origin:0 50%">Least-Squares Fitting</div></div>
  <div class="abs" style="left:19px;top:68px;width:111px;height:34px;background:#fff;border:1px solid #d9d9d9;border-bottom:none;z-index:3"><div class="t" style="left:10.6px;top:4.7px;font-size:18.6px;transform:scaleX(.928);transform-origin:0 50%">Instructions</div></div>
  <div id="page" class="abs">
    <div class="p" style="top:42.0px;transform:scaleX(1.0027)">The wavelength calibration for a spectrometer is determined by matching pixels with</div>
<div class="p" style="top:65.8px;transform:scaleX(1.0092)">wavelengths using the following equation:</div>
<div class="p" style="top:164.3px;transform:scaleX(0.9969)">Here λ is the wavelength in nanometers, P is the pixel number (0 to 2047), the the C</div>
<div class="p" style="top:188.0px;transform:scaleX(0.9978)">coefficients are chosen via least-squares fitting.  To recalibrate a spectrometer, set the</div>
<div class="p" style="top:211.8px;transform:scaleX(0.9849)">coefficients to C0=0, C1=1, C2=0, and C3=0 so that the spectrometer reads out the</div>
<div class="p" style="top:235.5px;transform:scaleX(1.0043)">spectrum in pixels.  Then use a known source such as a gas discharge lamp to</div>
<div class="p" style="top:259.2px;transform:scaleX(1.0048)">determine the pixel number where four or more known wavelengths are observed.</div>
<div class="p" style="top:283.0px;transform:scaleX(0.9943)">Then select the &quot;Least-Squares Fitting&quot; tab and enter the pixel/wavelength</div>
<div class="p" style="top:306.7px;transform:scaleX(1.0005)">combinations. The best coefficients will be computed as the data is entered.  For best</div>
<div class="p" style="top:330.5px;transform:scaleX(0.9975)">results, the known wavelengths should be spread across the entire spectrum.</div>
<div class="p" style="top:378.0px;transform:scaleX(0.9947)">To reset the coefficients to those stored in the spectrometer memory, click the &quot;Factory</div>
<div class="p" style="top:401.7px;transform:scaleX(1.0038)">Reset&quot; button.  To manually choose coefficients, enter them in the boxes below.  To</div>
<div class="p" style="top:425.5px;transform:scaleX(0.9950)">accept the changes, click OK.  To exit without changing the coefficients, click cancel.</div>
  </div>
  <div class="lbl" style="left:55.6px">C0 =</div><div class="inp" style="left:98.3px"><span>0</span></div>
  <div class="lbl" style="left:247.4px">C1 =</div><div class="inp" style="left:290px"><span>1</span></div>
  <div class="lbl" style="left:439.2px">C2 =</div><div class="inp" style="left:481.7px"><span>0</span></div>
  <div class="lbl" style="left:631px">C3 =</div><div class="inp" style="left:673.4px"><span>0</span></div>
  <div class="btn" style="left:21px;width:196px"><span style="left:-6px">Reset to Factory</span></div>
  <div class="btn" style="left:566px;width:115.4px;border:3px solid #0078d7"><span style="top:4px;left:-3.6px;transform:scaleX(1.02)">OK</span></div>
  <div class="btn" style="left:694px;width:115.8px"><span style="transform:scaleX(.98)">Cancel</span></div>
  <svg class="abs" style="left:822px;top:714px" width="18" height="18" viewBox="0 0 18 18" fill="#bdbdbd"><rect x="12" y="2" width="3" height="3"/><rect x="7.5" y="7" width="3" height="3"/><rect x="12" y="7" width="3" height="3"/><rect x="3" y="12" width="3" height="3"/><rect x="7.5" y="12" width="3" height="3"/><rect x="12" y="12" width="3" height="3"/></svg>
</div>
<svg class="abs" style="left:0;top:0;z-index:5" width="1600" height="1047" viewBox="0 0 1600 1047">
<text font-family="'Liberation Serif','DejaVu Serif',serif" fill="#111" font-size="33.5" y="340.6"><tspan x="275" font-style="italic">λ</tspan><tspan x="301.2">=</tspan><tspan x="328.6" font-style="italic">C</tspan><tspan x="350" y="346" font-size="23">0</tspan><tspan x="369.2" y="340.6">+</tspan><tspan x="395.6" font-style="italic">C</tspan><tspan x="416.5" y="346" font-size="23">1</tspan><tspan x="430.2" y="340.6" font-style="italic">P</tspan><tspan x="458.8">+</tspan><tspan x="485" font-style="italic">C</tspan><tspan x="506" y="346" font-size="23">2</tspan><tspan x="519.4" y="340.6" font-style="italic">P</tspan><tspan x="541.6" y="326.2" font-size="23">2</tspan><tspan x="561" y="340.6">+</tspan><tspan x="588.4" font-style="italic">C</tspan><tspan x="609.8" y="346" font-size="23">3</tspan><tspan x="623" y="340.6" font-style="italic">P</tspan><tspan x="646" y="326.2" font-size="23">3</tspan></text></svg>
</body></html>
